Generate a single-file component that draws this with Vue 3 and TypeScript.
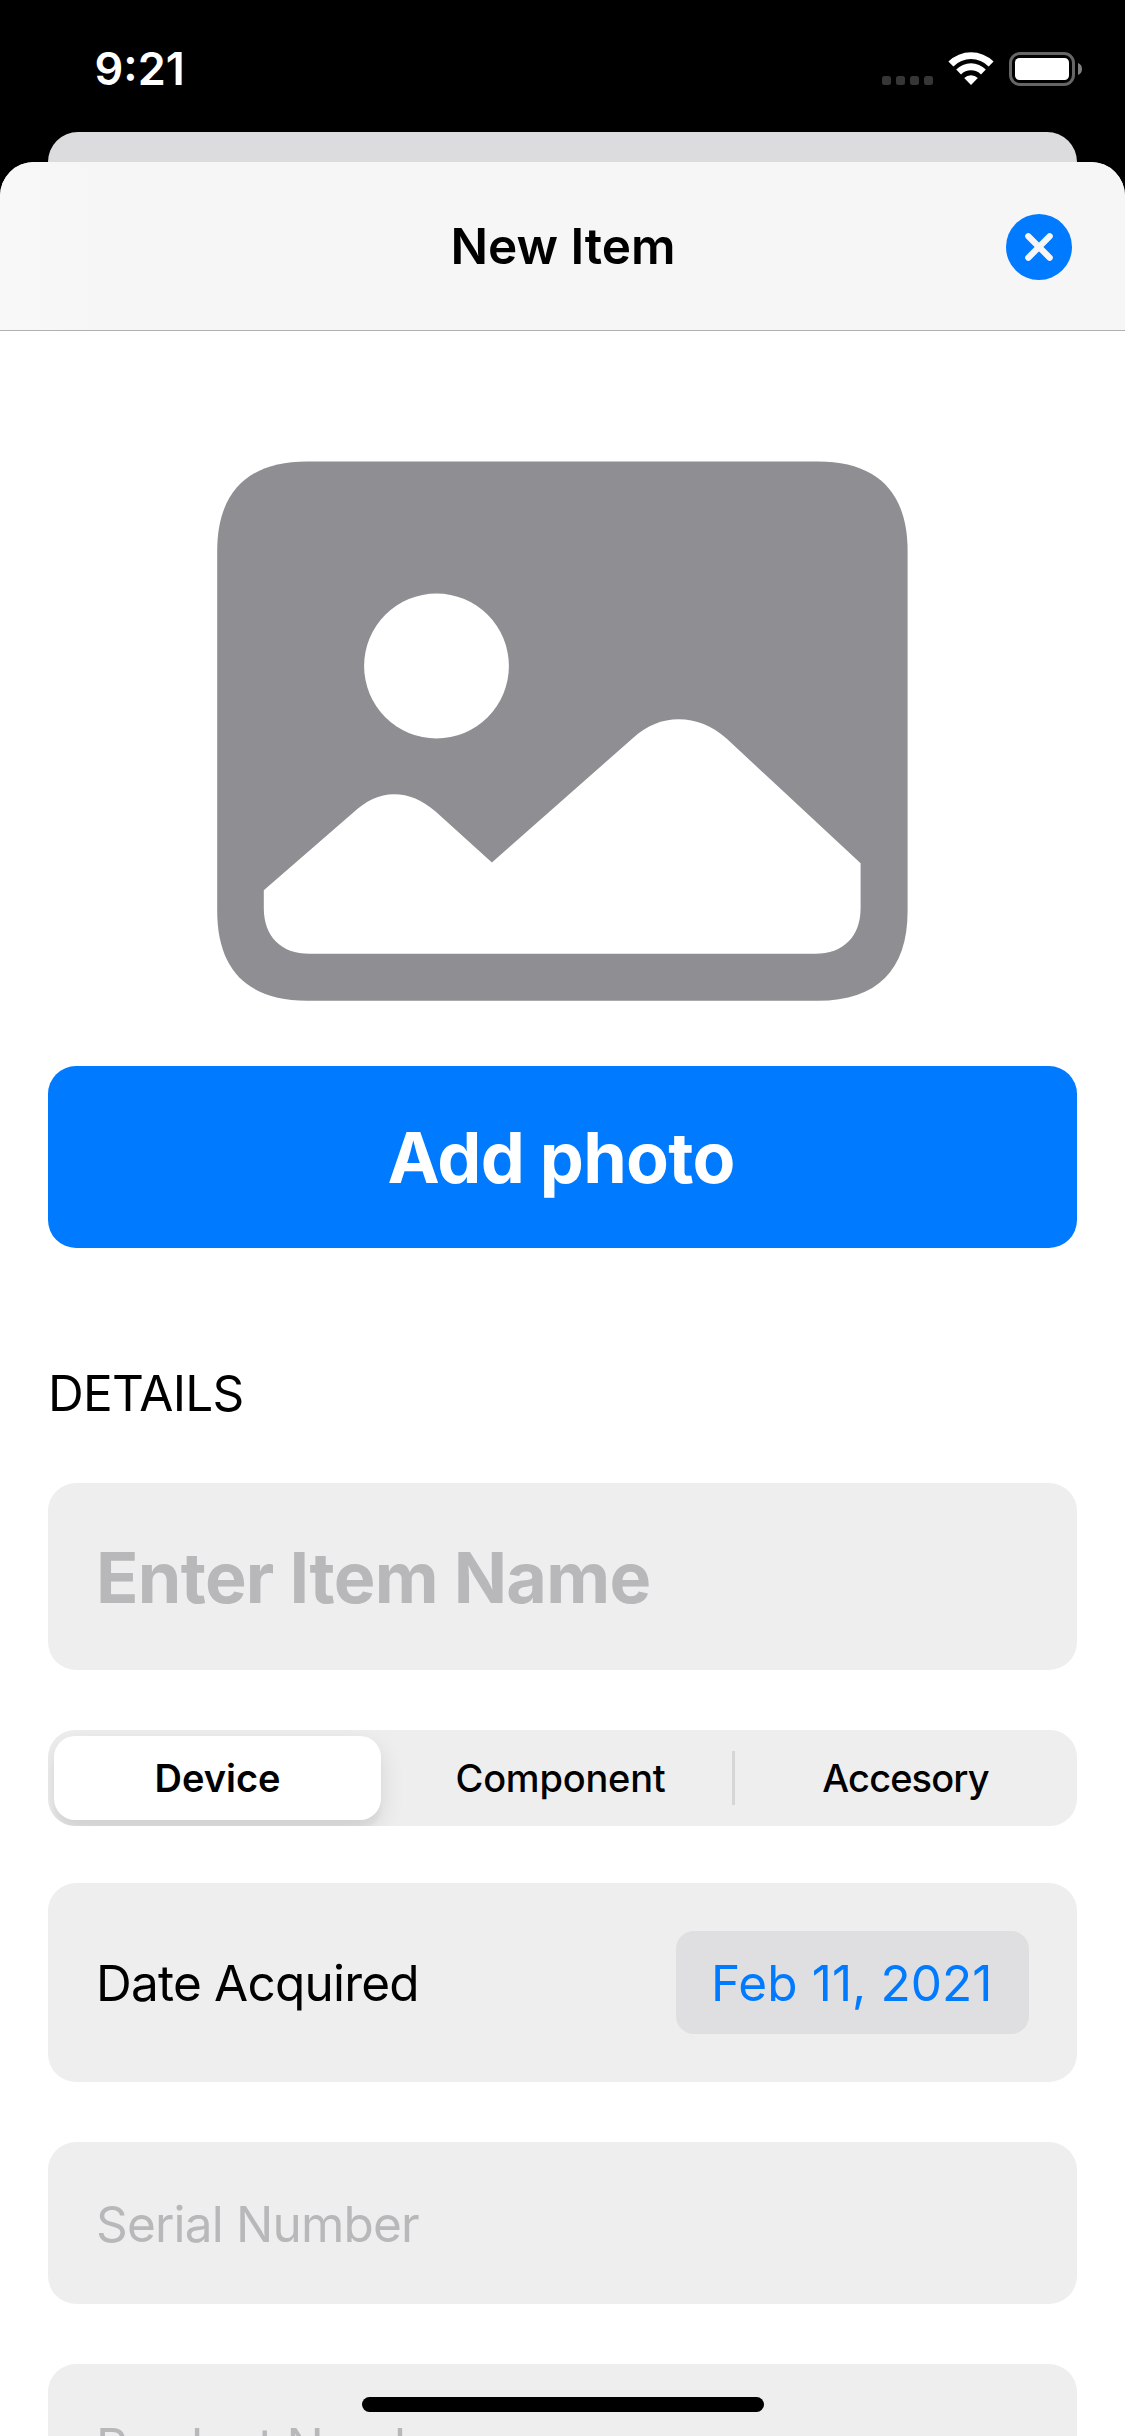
<script setup lang="ts">
import { ref } from 'vue'

const categories = ['Device', 'Component', 'Accesory']
const selected = ref(0)
const textFields = ['Serial Number', 'Product Number']
</script>

<template>
  <div class="screen">
    <div class="status">
      <span class="time">9:21</span>
      <div class="indicators">
        <div class="dots"><i v-for="n in 4" :key="n"></i></div>
        <svg class="wifi" width="46" height="34" viewBox="948 52 46 34" fill="#fff">
          <path d="M948.4 61.4A32.6 32.6 0 0 1 993.6 61.4L988.6 66.4A24.9 24.9 0 0 0 953.4 66.4Z" />
          <path d="M956.2 69.6A20.5 20.5 0 0 1 985.8 69.6L981 74.4A14 14 0 0 0 961 74.4Z" />
          <path d="M964.2 77.9A10 10 0 0 1 977.8 77.9L971 85Z" />
        </svg>
        <svg class="battery" width="74" height="34" viewBox="0 0 74 34">
          <rect x="1.5" y="1.5" width="63" height="31" rx="9.5" fill="none" stroke="#666" stroke-width="3" />
          <rect x="6" y="6" width="54" height="22" rx="4.5" fill="#fff" />
          <path d="M69 11Q73 12.500 73 17T69 23Z" fill="#808080" />
        </svg>
      </div>
    </div>
    <div class="back-card"></div>

    <main class="sheet">
      <header class="header">
        <span></span>
        <h1>New Item</h1>
        <button class="close" aria-label="Close">
          <svg width="66" height="66" viewBox="0 0 66 66">
            <circle cx="33" cy="33" r="33" fill="#007aff" />
            <path d="M22.300 22.300L43.700 43.700M43.700 22.300L22.300 43.700" stroke="#f6f6f6" stroke-width="6.200" stroke-linecap="round" />
          </svg>
        </button>
      </header>

      <section class="form">
        <svg class="photo" width="691" height="540" viewBox="217 461 691 540">
          <path fill="#8e8e93" d="M307 461.400H818C877 461.400 907.600 492 907.600 551V911C907.600 970 877 1000.800 818 1000.800H307C248 1000.800 217.200 970 217.200 911V551C217.200 492 248 461.400 307 461.400Z" />
          <circle cx="436.500" cy="666" r="72.400" fill="#fff" />
          <path fill="#fff" d="M263.800 890.200L353.600 812.300C366 801 379 794.300 394.100 794.300C409 794.300 422 800 435.600 811.500L491.900 862.400L633 738C647 725.500 662 719.300 678.600 719.300C696 719.300 712 725.500 726.500 738.500L860.600 863.300V908C860.600 936.500 843.500 953.800 815 953.800H309.500C281 953.800 263.800 936.500 263.800 908Z" />
        </svg>

        <button class="add">Add photo</button>

        <h2>DETAILS</h2>

        <div class="field name"><span>Enter Item Name</span></div>

        <div class="segments">
          <button
            v-for="(c, i) in categories"
            :key="c"
            class="segment"
            :class="{ active: i === selected, divided: i === 2 }"
            @click="selected = i"
          >{{ c }}</button>
        </div>

        <div class="field date">
          <span>Date Acquired</span>
          <span class="pill">Feb 11, 2021</span>
        </div>

        <div v-for="f in textFields" :key="f" class="field line"><span>{{ f }}</span></div>
      </section>
    </main>

    <div class="home"></div>
  </div>
</template>

<style>
html,
body {
  margin: 0;
  background: #000;
}
</style>

<style scoped>
.screen {
  position: relative;
  width: 1125px;
  height: 2436px;
  overflow: hidden;
  display: flex;
  flex-direction: column;
  background: #000;
  color: #000;
  font-family: Inter, "Liberation Sans", sans-serif;
  font-size: 49.5px;
}
button {
  border: 0;
  padding: 0;
  margin: 0;
  background: none;
  color: inherit;
  font: inherit;
}
h1,
h2 {
  margin: 0;
  font-size: inherit;
}
.status {
  flex: none;
  box-sizing: border-box;
  height: 132px;
  padding: 0 42px 0 94.5px;
  display: flex;
  justify-content: space-between;
  align-items: center;
  color: #fff;
}
.time {
  font-size: 45px;
  font-weight: 600;
  line-height: 54px;
  padding-top: 6px;
}
.indicators {
  display: flex;
  align-items: flex-end;
  padding-top: 6px;
}
.dots {
  display: flex;
  gap: 5px;
  margin: 0 15px 1px 0;
}
.dots i {
  width: 9px;
  height: 9px;
  border-radius: 2.5px;
  background: #363636;
}
.wifi {
  margin-right: 15px;
}
.back-card {
  flex: none;
  height: 30px;
  margin: 0 48px;
  border-radius: 30px 30px 0 0;
  background: #dcdcde;
}
.sheet {
  flex: 1;
  min-height: 0;
  display: flex;
  flex-direction: column;
  overflow: hidden;
  border-radius: 34px 34px 0 0;
  background: #fff;
}
.header {
  flex: none;
  height: 168px;
  padding: 0 53px;
  display: grid;
  grid-template-columns: 66px 1fr 66px;
  align-items: center;
  background: linear-gradient(90deg, #f8f8f8, #f6f6f6 100px);
  border-bottom: 1px solid #b1b1b3;
}
.header h1 {
  text-align: center;
  font-weight: 600;
  line-height: 60px;
  letter-spacing: -0.07px;
  padding-left: 1px;
}
.close {
  height: 66px;
  line-height: 0;
  padding-top: 1px;
}
.form {
  display: flex;
  flex-direction: column;
  padding: 130px 48px 0;
}
.photo {
  flex: none;
  align-self: center;
}
.add {
  flex: none;
  box-sizing: border-box;
  height: 182px;
  margin-top: 65px;
  padding: 1px 3px 0 0;
  border-radius: 28px;
  background: #007aff;
  color: #fff;
  font-size: 70px;
  font-weight: 700;
  letter-spacing: -0.75px;
  line-height: 181px;
}
h2 {
  font-weight: 400;
  line-height: 60px;
  letter-spacing: -0.68px;
  margin: 115px 0 60px;
}
.field {
  flex: none;
  box-sizing: border-box;
  display: flex;
  align-items: center;
  border-radius: 28px;
  background: #eee;
  padding: 0 48px;
  white-space: nowrap;
}
.name {
  height: 187px;
  color: #b8b8ba;
  font-size: 70px;
  font-weight: 700;
  letter-spacing: -0.72px;
  padding-top: 2px;
}
.segments {
  flex: none;
  box-sizing: border-box;
  height: 96px;
  margin: 60px 0 57px;
  padding: 6px 0 6px 6px;
  display: grid;
  grid-template-columns: 327px 351px 345px;
  align-items: center;
  border-radius: 27px;
  background: #eee;
  overflow: hidden;
}
.segment {
  font-size: 38px;
  font-weight: 500;
  letter-spacing: -0.22px;
  line-height: 54px;
  padding-left: 8px;
}
.segment.active {
  height: 84px;
  padding-left: 0;
  border-radius: 21px;
  background: #fff;
  font-weight: 600;
  letter-spacing: 0;
  box-shadow: 0 9px 24px rgba(0, 0, 0, 0.11), 0 9px 3px rgba(0, 0, 0, 0.03);
}
.segment.divided {
  border-left: 3px solid #d6d6d7;
  padding: 0 1px 0 0;
  letter-spacing: -0.88px;
}
.date {
  height: 199px;
  letter-spacing: -0.78px;
}
.pill {
  box-sizing: border-box;
  width: 353px;
  height: 103px;
  margin-left: auto;
  padding: 1px 0 0 35px;
  line-height: 102px;
  border-radius: 18px;
  background: #dfdfe1;
  color: #007aff;
  letter-spacing: 0.08px;
}
.line {
  height: 162px;
  margin-top: 60px;
  padding-top: 2px;
  color: #b8b8ba;
  letter-spacing: -0.82px;
}
.home {
  position: absolute;
  left: 362px;
  top: 2397px;
  width: 402px;
  height: 15px;
  border-radius: 7.5px;
  background: #000;
}
</style>
